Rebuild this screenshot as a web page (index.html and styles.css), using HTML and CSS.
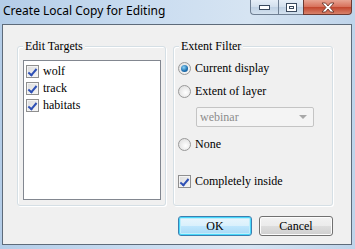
FILE: index.html
```html
<!DOCTYPE html>
<html>
<head>
<meta charset="utf-8">
<link rel="stylesheet" href="styles.css">
</head>
<body>
<div class="window">
  <div class="titlebar">
    <span class="title">Create Local Copy for Editing</span>
    <div class="caption-buttons">
      <div class="cbtn cbtn-min"><svg width="11" height="5" viewBox="0 0 11 5"><rect x="0.5" y="0.5" width="10" height="4" fill="#fff" stroke="#3b4a5e"/></svg></div>
      <div class="cbtn cbtn-max"><svg width="11" height="9" viewBox="0 0 11 9"><rect x="0.5" y="0.5" width="10" height="8" fill="#fff" stroke="#3b4a5e"/><rect x="3.5" y="3.5" width="4" height="2" fill="none" stroke="#3b4a5e"/></svg></div>
      <div class="cbtn cbtn-close"><svg width="14" height="11" viewBox="0 0 14 11"><path d="M1 1 L4.5 1 L7 4 L9.5 1 L13 1 L9 5.5 L13 10 L9.5 10 L7 7 L4.5 10 L1 10 L5 5.5 Z" fill="#fff" stroke="#5a2a20" stroke-width="0.8"/></svg></div>
    </div>
  </div>
  <div class="client">
    <div class="groups">
      <div class="group group-targets">
        <span class="group-title">Edit Targets</span>
        <div class="listbox">
          <div class="item"><span class="check"></span><span>wolf</span></div>
          <div class="item"><span class="check"></span><span>track</span></div>
          <div class="item"><span class="check"></span><span>habitats</span></div>
        </div>
      </div>
      <div class="group group-extent">
        <span class="group-title">Extent Filter</span>
        <div class="option"><span class="radio radio-on"></span><span>Current display</span></div>
        <div class="option option-2"><span class="radio"></span><span>Extent of layer</span></div>
        <div class="combo"><span class="combo-text">webinar</span><span class="combo-arrow"></span></div>
        <div class="option option-3"><span class="radio"></span><span>None</span></div>
        <div class="option option-4"><span class="check"></span><span>Completely inside</span></div>
      </div>
    </div>
    <div class="buttons">
      <div class="btn btn-default">OK</div>
      <div class="btn">Cancel</div>
    </div>
  </div>
</div>
</body>
</html>
```
FILE: styles.css
```css
* { box-sizing: border-box; }
html, body { margin: 0; padding: 0; }
body { width: 355px; height: 249px; overflow: hidden; }
.window {
  width: 355px; height: 249px;
  background: linear-gradient(to right, #b4cde8, #c9dcf0 40%, #d6e4f2 70%, #bfd4ea);
  display: flex; flex-direction: column;
}
.titlebar {
  height: 24px; display: flex; align-items: flex-start;
}
.title {
  font-family: "Noto Sans", sans-serif; font-size: 12px; color: #000;
  margin: 2px 0 0 3px; line-height: 17px;
}
.caption-buttons { margin-left: auto; margin-right: 3px; display: flex; }
.cbtn {
  height: 15px; display: flex; align-items: center; justify-content: center;
  border: 1px solid #6f7f93; border-top: none;
  background: linear-gradient(#e6eef7, #d2dfed 50%, #bfd0e3 51%, #d3e1ef);
}
.cbtn-min { width: 28px; border-bottom-left-radius: 4px; border-right: none; }
.cbtn-max { width: 25px; border-right: none; }
.cbtn-close {
  width: 49px; border-bottom-right-radius: 4px; border-color: #6d3a32;
  background: linear-gradient(#e8a493, #d7705a 50%, #c2452d 51%, #d8826b);
}
.client {
  margin-left: 2px; width: 350px; height: 221px;
  border: 1px solid #5e6b7a; background: #f0f0f0;
  padding: 21px 18px 0 14px;
  font-family: "Liberation Serif", "Times New Roman", "DejaVu Serif", serif;
  font-size: 12px; color: #000;
}
.groups { display: flex; gap: 7px; }
.group {
  position: relative; height: 160px;
  border: 1px solid #d5dfe5; border-radius: 3px;
  box-shadow: inset 1px 1px 0 #fff, 1px 1px 0 #fff;
}
.group-title {
  position: absolute; left: 5px; top: -8px; padding: 0 2px;
  background: #f0f0f0; line-height: 14px;
}
.group-targets { width: 149px; padding: 13px 4px 5px 5px; }
.group-extent { width: 160px; padding: 14px 4px 0 4px; }
.listbox {
  width: 138px; height: 140px; background: #fff;
  border: 1px solid #828790; padding: 2px 0 0 2px;
}
.item { height: 17px; display: flex; align-items: center; gap: 4px; }
.check {
  width: 13px; height: 13px; flex: none; position: relative;
  border: 1px solid #8f8f8f;
  background: linear-gradient(135deg, #dcdcdc, #f6f6f6);
  box-shadow: inset 0 0 0 1px #f4f4f4;
}
.check::after {
  content: ""; position: absolute; left: 3px; top: 1px;
  width: 3px; height: 7px;
  border: solid #2e50b5; border-width: 0 2px 2px 0;
  transform: rotate(40deg);
}
.option { height: 13px; display: flex; align-items: center; gap: 4px; margin-top: 1px; }
.option-2 { margin-top: 10px; }
.option-3 { margin-top: 11px; }
.option-4 { margin-top: 24px; }
.radio {
  width: 13px; height: 13px; border-radius: 50%; flex: none; position: relative;
  border: 1px solid #999;
  background: radial-gradient(circle at 60% 60%, #fff, #d8d8d8);
}
.radio-on::after {
  content: ""; position: absolute; left: 2px; top: 2px; width: 7px; height: 7px;
  border-radius: 50%;
  background: radial-gradient(circle at 40% 35%, #8fd5f8, #1a6cad 60%, #0c4a85);
}
.combo {
  margin: 9px 0 0 18px; width: 118px; height: 20px;
  border: 1px solid #c4c4c4; border-radius: 2px; background: #f4f4f4;
  display: flex; align-items: center; padding-left: 3px; color: #8d8d8d;
}
.combo-text { flex: 1; }
.combo-arrow {
  width: 0; height: 0; margin-right: 6px;
  border-left: 4px solid transparent; border-right: 4px solid transparent;
  border-top: 4px solid #a8a8a8;
}
.buttons { display: flex; justify-content: flex-end; gap: 7px; margin-top: 10px; }
.btn {
  width: 74px; height: 20px; border: 1px solid #707070; border-radius: 3px;
  background: linear-gradient(#f2f2f2, #ebebeb 50%, #dddddd 51%, #cfcfcf);
  box-shadow: inset 0 0 0 1px #fcfcfc;
  display: flex; align-items: center; justify-content: center; line-height: 14px;
}
.btn-default {
  border-color: #3c7fb1;
  box-shadow: inset 0 0 0 1px #48d8fb, inset 0 0 0 2px #bfeefc;
  background: linear-gradient(#eaf6fd, #d9f0fc 50%, #bee6fd 51%, #a7d9f5);
}
```
